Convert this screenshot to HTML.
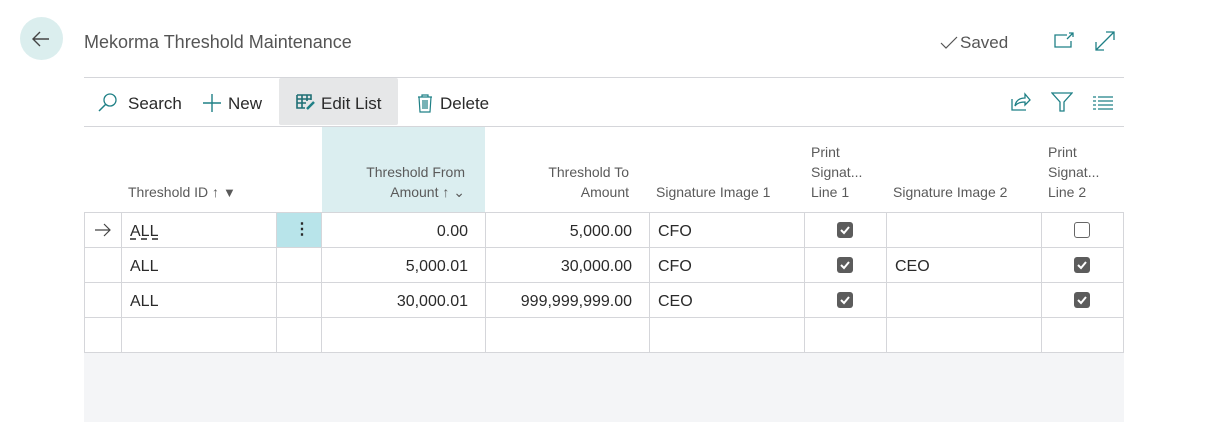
<!DOCTYPE html><html><head><style>
*{margin:0;padding:0;box-sizing:border-box}
body{width:1207px;height:422px;background:#fff;font-family:"Liberation Sans",sans-serif;position:relative;overflow:hidden;color:#2a2a2a}
.a{position:absolute;white-space:nowrap}
.h{color:#5a5a5a;font-size:14px;line-height:20px}
.c{font-size:16px;line-height:37px}
.vl{position:absolute;width:1px;background:#d5d6da}
.hl{position:absolute;height:1px;background:#d5d6da}
.cb{position:absolute;width:16px;height:16px;border-radius:3px;background:#5c5c5c}
.cb svg{position:absolute;left:2px;top:2px}
.ub{position:absolute;width:16px;height:16px;border-radius:3px;border:1px solid #666;background:#fff}
</style></head><body>
<div class="a" style="left:20px;top:17px;width:43px;height:43px;border-radius:50%;background:#dbeeee"></div>
<svg class="a" style="left:29px;top:27px" width="24" height="24" viewBox="0 0 24 24"><path d="M20 12H4M11 5L4 12L11 19" fill="none" stroke="#444" stroke-width="1.4"/></svg>
<div class="a" style="left:84px;top:32px;font-size:18px;color:#555">Mekorma Threshold Maintenance</div>
<svg class="a" style="left:940px;top:35px" width="18" height="16"><path d="M1 8L6 13L17 2" fill="none" stroke="#555" stroke-width="1.2"/></svg>
<div class="a" style="left:960px;top:33px;font-size:17px;color:#555">Saved</div>
<svg class="a" style="left:1053px;top:31px" width="22" height="18"><path d="M14 4H2V16H18V10M16 2H20V6M20 2L14 8" fill="none" stroke="#1f8086" stroke-width="1.3"/></svg>
<svg class="a" style="left:1094px;top:30px" width="22" height="22"><path d="M2 20L20 2M12 2H20V10M2 12V20H10" fill="none" stroke="#1f8086" stroke-width="1.3"/></svg>
<div class="hl" style="left:84px;top:77px;width:1040px"></div>
<div class="hl" style="left:84px;top:126px;width:1040px"></div>
<div class="a" style="left:279px;top:78px;width:119px;height:47px;background:#e6e7e8;border-radius:2px"></div>
<svg class="a" style="left:97px;top:92px" width="22" height="22"><circle cx="13" cy="8" r="6" fill="none" stroke="#1f8086" stroke-width="1.3"/><path d="M9 12L2 19" stroke="#1f8086" stroke-width="1.5"/></svg>
<div class="a" style="left:128px;top:94px;font-size:17px">Search</div>
<svg class="a" style="left:202px;top:93px" width="20" height="20"><path d="M10 1V19M1 10H19" stroke="#1f8086" stroke-width="1.4"/></svg>
<div class="a" style="left:228px;top:94px;font-size:17px">New</div>
<svg class="a" style="left:296px;top:93px" width="20" height="18"><path d="M1 2H15V7M1 2V15H9M1 6H15M1 10H10M6 2V15M11 2V8" fill="none" stroke="#1f6f74" stroke-width="1.6"/><path d="M11 16L18 9" stroke="#1f8086" stroke-width="2.5"/></svg>
<div class="a" style="left:321px;top:94px;font-size:17px">Edit List</div>
<svg class="a" style="left:416px;top:93px" width="18" height="20"><path d="M2 4H16M6 4V2H12V4M3 4L4 19H14L15 4M7 7V16M9 7V16M11 7V16" fill="none" stroke="#1f8086" stroke-width="1.2"/></svg>
<div class="a" style="left:440px;top:94px;font-size:17px">Delete</div>
<svg class="a" style="left:1010px;top:91px" width="22" height="22"><path d="M2 8V19H16M5 15C6 9 10 7 15 7V3L20 9L15 14V11C10 11 7 12 5 15Z" fill="none" stroke="#1f8086" stroke-width="1.3"/></svg>
<svg class="a" style="left:1051px;top:92px" width="22" height="20"><path d="M1 1H21L13 10V19H9V10Z" fill="none" stroke="#1f8086" stroke-width="1.3"/></svg>
<svg class="a" style="left:1093px;top:96px" width="20" height="14"><path d="M0 1H3M5 1H20M0 5H3M5 5H20M0 9H3M5 9H20M0 13H3M5 13H20" stroke="#1f8086" stroke-width="1.2"/></svg>
<div class="a" style="left:322px;top:127px;width:163px;height:85px;background:#dbeef0"></div>
<div class="a h" style="left:128px;top:182px">Threshold ID ↑ <span style="font-size:13px">▼</span></div>
<div class="a h" style="left:322px;top:162px;width:143px;text-align:right">Threshold From<br>Amount ↑ ⌄</div>
<div class="a h" style="left:486px;top:162px;width:143px;text-align:right">Threshold To<br>Amount</div>
<div class="a h" style="left:656px;top:182px">Signature Image 1</div>
<div class="a h" style="left:811px;top:142px">Print<br>Signat...<br>Line 1</div>
<div class="a h" style="left:893px;top:182px">Signature Image 2</div>
<div class="a h" style="left:1048px;top:142px">Print<br>Signat...<br>Line 2</div>
<div class="hl" style="left:84px;top:212px;width:1040px"></div>
<div class="hl" style="left:84px;top:247px;width:1040px"></div>
<div class="hl" style="left:84px;top:282px;width:1040px"></div>
<div class="hl" style="left:84px;top:317px;width:1040px"></div>
<div class="hl" style="left:84px;top:352px;width:1040px"></div>
<div class="vl" style="left:84px;top:212px;height:140px"></div>
<div class="vl" style="left:121px;top:212px;height:140px"></div>
<div class="vl" style="left:276px;top:212px;height:140px"></div>
<div class="vl" style="left:321px;top:212px;height:140px"></div>
<div class="vl" style="left:485px;top:212px;height:140px"></div>
<div class="vl" style="left:649px;top:212px;height:140px"></div>
<div class="vl" style="left:804px;top:212px;height:140px"></div>
<div class="vl" style="left:886px;top:212px;height:140px"></div>
<div class="vl" style="left:1041px;top:212px;height:140px"></div>
<div class="vl" style="left:1123px;top:212px;height:140px"></div>
<div class="a" style="left:84px;top:353px;width:1040px;height:69px;background:#f4f5f7"></div>
<div class="a" style="left:277px;top:213px;width:44px;height:34px;background:#b8e4ea"></div>
<div class="a c" style="left:294px;top:213px;font-weight:bold;line-height:34px">⋮</div>
<svg class="a" style="left:94px;top:223px" width="18" height="14"><path d="M1 7H16M10 1L16 7L10 13" fill="none" stroke="#444" stroke-width="1.2"/></svg>
<div class="a c" style="left:130px;top:213px;text-decoration:underline dashed;text-underline-offset:3px">ALL</div>
<div class="a c" style="left:130px;top:248px">ALL</div>
<div class="a c" style="left:130px;top:283px">ALL</div>
<div class="a c" style="left:322px;top:213px;width:146px;text-align:right">0.00</div>
<div class="a c" style="left:322px;top:248px;width:146px;text-align:right">5,000.01</div>
<div class="a c" style="left:322px;top:283px;width:146px;text-align:right">30,000.01</div>
<div class="a c" style="left:486px;top:213px;width:146px;text-align:right">5,000.00</div>
<div class="a c" style="left:486px;top:248px;width:146px;text-align:right">30,000.00</div>
<div class="a c" style="left:486px;top:283px;width:146px;text-align:right">999,999,999.00</div>
<div class="a c" style="left:658px;top:213px">CFO</div>
<div class="a c" style="left:658px;top:248px">CFO</div>
<div class="a c" style="left:658px;top:283px">CEO</div>
<div class="a c" style="left:895px;top:248px">CEO</div>
<div class="cb" style="left:837px;top:222px"><svg width="12" height="12"><path d="M2 6L5 9L10 3" fill="none" stroke="#fff" stroke-width="2"/></svg></div>
<div class="cb" style="left:837px;top:257px"><svg width="12" height="12"><path d="M2 6L5 9L10 3" fill="none" stroke="#fff" stroke-width="2"/></svg></div>
<div class="cb" style="left:837px;top:292px"><svg width="12" height="12"><path d="M2 6L5 9L10 3" fill="none" stroke="#fff" stroke-width="2"/></svg></div>
<div class="ub" style="left:1074px;top:222px"></div>
<div class="cb" style="left:1074px;top:257px"><svg width="12" height="12"><path d="M2 6L5 9L10 3" fill="none" stroke="#fff" stroke-width="2"/></svg></div>
<div class="cb" style="left:1074px;top:292px"><svg width="12" height="12"><path d="M2 6L5 9L10 3" fill="none" stroke="#fff" stroke-width="2"/></svg></div>
</body></html>
